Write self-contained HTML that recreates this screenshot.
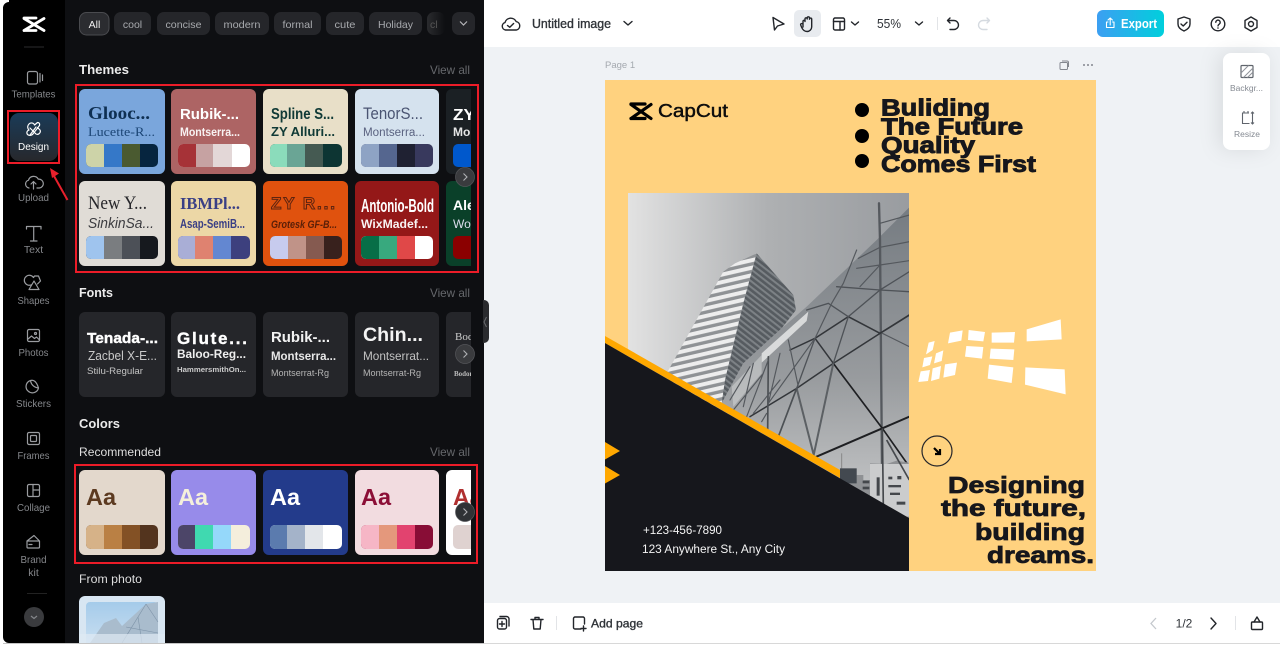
<!DOCTYPE html>
<html lang="en"><head><meta charset="utf-8"><title>Untitled image</title>
<style>
html,body{margin:0;padding:0;background:#fff;width:1280px;height:646px;overflow:hidden}
svg{display:block;font-family:"Liberation Sans",sans-serif}
.ic{fill:none;stroke:#9a9ca0;stroke-width:1.2;stroke-linecap:round;stroke-linejoin:round}
.hd{fill:none;stroke:#22252a;stroke-width:1.4;stroke-linecap:round;stroke-linejoin:round}
.rl{fill:#85878b;font-size:10.5px;text-anchor:middle}
.ch{fill:#a8aaae;font-size:10.5px;text-anchor:middle}
.va{fill:#66686c;font-size:12px}
.ti{fill:#ececec;font-size:13px;font-weight:bold}
.sb{fill:#dedede;font-size:12px}
.se{font-family:"Liberation Serif",serif}
.x{stroke-width:.35px}
</style></head><body>
<svg xmlns="http://www.w3.org/2000/svg" width="1280" height="646" viewBox="0 0 1280 646">
<defs>
<linearGradient id="dz" x1="0" y1="0" x2="0" y2="1"><stop offset="0" stop-color="#1a3b58"/><stop offset="1" stop-color="#27282c"/></linearGradient>
<linearGradient id="ex" x1="0" y1="0" x2="1" y2="0"><stop offset="0" stop-color="#3c9ff2"/><stop offset="1" stop-color="#00cfdc"/></linearGradient>
<linearGradient id="sky" x1="0" y1="0" x2="1" y2="0"><stop offset="0" stop-color="#e2e2e2"/><stop offset=".5" stop-color="#aeb0b2"/><stop offset="1" stop-color="#999ca0"/></linearGradient>
<linearGradient id="gl" x1="0" y1="0" x2="0" y2="1"><stop offset="0" stop-color="#757b81"/><stop offset=".55" stop-color="#989b9e"/><stop offset="1" stop-color="#cbcccd"/></linearGradient>
<linearGradient id="ph" x1="0" y1="0" x2="0" y2="1"><stop offset="0" stop-color="#a5cbea"/><stop offset="1" stop-color="#cfe2f2"/></linearGradient>
<linearGradient id="fd" x1="0" y1="0" x2="1" y2="0"><stop offset="0" stop-color="#2a2b2e"/><stop offset="1" stop-color="#0e0f12"/></linearGradient>
<clipPath id="cl"><rect x="79" y="0" width="392" height="643"/></clipPath>
<clipPath id="pc"><rect x="628" y="193" width="281" height="340"/></clipPath>
<clipPath id="lf"><path d="M170 40L105 70 70 95 -100 400V500H65L75 420 130 190Z"/></clipPath>
<clipPath id="dk"><path d="M170 40L280 165 288 210 245 265 130 370 65 490 75 420 130 190Z"/></clipPath>
<pattern id="st" width="200" height="22" patternUnits="userSpaceOnUse" patternTransform="rotate(-13)"><rect width="200" height="22" fill="#8f9295"/><rect width="200" height="12" fill="#ededed"/></pattern>
<pattern id="sd" width="200" height="14" patternUnits="userSpaceOnUse" patternTransform="rotate(38)"><rect width="200" height="14" fill="#565b60"/><rect width="200" height="6" fill="#7d8286"/></pattern>
</defs>

<!-- shell -->
<rect x="484" y="0" width="796" height="644" fill="#eff2f5"/>
<rect x="484" y="0" width="796" height="47" fill="#fff"/>
<rect x="484" y="603" width="796" height="40" fill="#fff"/>
<rect x="484" y="643" width="796" height="1" fill="#d8d8d8"/>
<path d="M3 8a6 6 0 0 1 6-6V0H484V643H9a6 6 0 0 1-6-6Z" fill="#000"/>
<rect x="65" y="0" width="419" height="643" fill="#0e0f12"/>
<rect x="3" y="643" width="481" height="1" fill="#c4c4c4"/>

<!-- rail -->
<path d="M24 18H36M24 30.500H36M24 18.500L44 30.500M24 30.500L44 18.500" fill="none" stroke="#fff" stroke-width="2.800" stroke-linecap="round"/>
<rect x="24" y="46.500" width="20" height="1" fill="#2c2c2e"/>
<g class="ic">
<rect x="27.500" y="71.500" width="10" height="12.500" rx="2"/><path d="M40 73.500V82M42.500 75V80.500"/>
<path d="M29 188a4 4 0 0 1-.5-7.800 5.300 5.300 0 0 1 9.800-1 4.300 4.300 0 0 1 1.200 8.800h-2.500M33.500 189v-7M31 184l2.500-2.500 2.500 2.500"/>
<path d="M26.500 229v-2.500H41V229M33.700 226.500V241M30.500 241h6.500"/>
<path d="M32 284.500a5 5 0 1 1 1.500-7l1-1.500h4l2 5-3 3M34 281l-5 8.500h10Z"/>
<rect x="27.500" y="329.500" width="12" height="12" rx="1.500"/><path d="M28 339l3.500-3 3 2.500 2-1.500 2.500 2.500"/><circle cx="35.500" cy="333.500" r="1"/>
<path d="M38.500 388a6.300 6.300 0 1 1-8-7.500c.5 4 3.500 7 8 7.500ZM30.500 380.500c3-1 6 .8 8 7.500"/>
<rect x="27.500" y="432.500" width="12" height="12" rx="1.500"/><rect x="30.500" y="435.500" width="6" height="6" rx="1"/>
<rect x="27.500" y="484.500" width="12" height="12" rx="1.500"/><path d="M33 484.500v12M33 490h6.500"/>
<path d="M27 541l7-5.500 5.500 5.500M27 541h12.500v6a1 1 0 0 1-1 1H28a1 1 0 0 1-1-1ZM29 544.500h3"/>
</g>
<text class="rl" x="33.500" y="97.500" textLength="44" lengthAdjust="spacingAndGlyphs">Templates</text>
<rect x="8" y="111" width="51" height="52" fill="none" stroke="#ec1c28" stroke-width="2"/>
<rect x="10" y="113" width="48" height="48" rx="9" fill="url(#dz)"/>
<path d="M29 124a3.500 3.500 0 0 1 5 0l.5 1 3-2.500c1.500 0 2.500 1 2 3l-7 9c-2 1.500-5 1-5.500-1-.5-1.500.5-3 2-3.500-2-2-1.500-4.500 0-6ZM30 128l6 6a3 3 0 0 0 4-4l-2.500-2.500M30 135l6-8" fill="none" stroke="#fff" stroke-width="1.200" stroke-linecap="round" stroke-linejoin="round"/>
<text x="33.500" y="150" fill="#fff" font-size="10.500" text-anchor="middle" textLength="31" lengthAdjust="spacingAndGlyphs">Design</text>
<path d="M67.500 200L54 176" stroke="#e8202c" stroke-width="2" fill="none"/><path d="M50 168l9 5.500-7 4.500Z" fill="#e8202c"/>
<text class="rl" x="33.500" y="201" textLength="31" lengthAdjust="spacingAndGlyphs">Upload</text>
<text class="rl" x="33.500" y="253">Text</text>
<text class="rl" x="33.500" y="304" textLength="32" lengthAdjust="spacingAndGlyphs">Shapes</text>
<text class="rl" x="33.500" y="356" textLength="30" lengthAdjust="spacingAndGlyphs">Photos</text>
<text class="rl" x="33.500" y="407" textLength="35" lengthAdjust="spacingAndGlyphs">Stickers</text>
<text class="rl" x="33.500" y="459" textLength="32" lengthAdjust="spacingAndGlyphs">Frames</text>
<text class="rl" x="33.500" y="511" textLength="33" lengthAdjust="spacingAndGlyphs">Collage</text>
<text class="rl" x="33.500" y="563" textLength="26" lengthAdjust="spacingAndGlyphs">Brand</text>
<text class="rl" x="33.500" y="576">kit</text>
<rect x="27" y="593" width="20" height="1" fill="#222"/>
<circle cx="34" cy="617" r="10" fill="#3a3b3e"/><path d="M31 616l3 2.500 3-2.500" fill="none" stroke="#85878b" stroke-width="1.200"/>

<!-- chips -->
<rect x="79.500" y="12.500" width="29.500" height="22.500" rx="7" fill="#2b2c30" stroke="#4a4b4f"/>
<text x="94.500" y="28" fill="#f0f0f0" font-size="10.500" text-anchor="middle">All</text>
<rect x="114" y="12" width="37" height="23" rx="7" fill="#25262a"/><text class="ch" x="132.500" y="28">cool</text>
<rect x="157" y="12" width="53" height="23" rx="7" fill="#25262a"/><text class="ch" x="183.500" y="28" textLength="36" lengthAdjust="spacingAndGlyphs">concise</text>
<rect x="215" y="12" width="54" height="23" rx="7" fill="#25262a"/><text class="ch" x="242" y="28" textLength="37" lengthAdjust="spacingAndGlyphs">modern</text>
<rect x="274" y="12" width="47" height="23" rx="7" fill="#25262a"/><text class="ch" x="297.500" y="28" textLength="30" lengthAdjust="spacingAndGlyphs">formal</text>
<rect x="326" y="12" width="38" height="23" rx="7" fill="#25262a"/><text class="ch" x="345" y="28" textLength="21" lengthAdjust="spacingAndGlyphs">cute</text>
<rect x="369" y="12" width="53" height="23" rx="7" fill="#25262a"/><text class="ch" x="395.500" y="28" textLength="35" lengthAdjust="spacingAndGlyphs">Holiday</text>
<rect x="427" y="12" width="18" height="23" rx="7" fill="url(#fd)"/><text x="430" y="28" fill="#555" font-size="10.500">cl</text>
<rect x="452" y="12" width="23" height="23" rx="7" fill="#25262a"/><path d="M460 21.500l3.500 3.500 3.500-3.500" fill="none" stroke="#b5b6b9" stroke-width="1.200"/>

<!-- headings -->
<text class="ti" x="79" y="74" textLength="50" lengthAdjust="spacingAndGlyphs">Themes</text>
<text class="va" x="430" y="74" textLength="40" lengthAdjust="spacingAndGlyphs">View all</text>
<text class="ti" x="79" y="297" textLength="34" lengthAdjust="spacingAndGlyphs">Fonts</text>
<text class="va" x="430" y="297" textLength="40" lengthAdjust="spacingAndGlyphs">View all</text>
<text class="ti" x="79" y="428" textLength="41" lengthAdjust="spacingAndGlyphs">Colors</text>
<text class="sb" x="79" y="456" textLength="82" lengthAdjust="spacingAndGlyphs">Recommended</text>
<text class="va" x="430" y="456" textLength="40" lengthAdjust="spacingAndGlyphs">View all</text>
<text class="sb" x="79" y="583" textLength="63" lengthAdjust="spacingAndGlyphs">From photo</text>

<g clip-path="url(#cl)">
<!-- themes row 1 -->
<rect x="79" y="89" width="86" height="85" rx="6" fill="#7aa6dc"/>
<text class="se" x="88" y="119" fill="#0e2f52" font-size="18" font-weight="bold" textLength="62" lengthAdjust="spacingAndGlyphs">Glooc...</text>
<text class="se" x="88" y="136" fill="#1c4676" font-size="13" textLength="67" lengthAdjust="spacingAndGlyphs">Lucette-R...</text>
<g><rect x="86" y="144" width="72" height="23" rx="5" fill="#06253f"/><path d="M104 144H91a5 5 0 0 0-5 5v13a5 5 0 0 0 5 5h13Z" fill="#cdd3a8"/><rect x="104" y="144" width="18" height="23" fill="#3578c8"/><rect x="122" y="144" width="18" height="23" fill="#4a5a30"/></g>

<rect x="171" y="89" width="85" height="85" rx="6" fill="#ad6464"/>
<text x="180" y="119" fill="#fff" font-size="15" font-weight="bold" textLength="59" lengthAdjust="spacingAndGlyphs">Rubik-...</text>
<text x="180" y="136" fill="#fff" font-size="12" font-weight="bold" textLength="60" lengthAdjust="spacingAndGlyphs" opacity=".92">Montserra...</text>
<g><rect x="178" y="144" width="72" height="23" rx="5" fill="#fff"/><path d="M196 144H183a5 5 0 0 0-5 5v13a5 5 0 0 0 5 5h13Z" fill="#a63237"/><rect x="196" y="144" width="17" height="23" fill="#c6a2a2"/><rect x="213" y="144" width="19" height="23" fill="#e3d7d7"/></g>

<rect x="263" y="89" width="85" height="85" rx="6" fill="#e8dfc8"/>
<text x="271" y="119" fill="#103a36" font-size="16" font-weight="bold" textLength="63" lengthAdjust="spacingAndGlyphs">Spline S...</text>
<text x="271" y="136" fill="#103a36" font-size="13" font-weight="bold" textLength="64" lengthAdjust="spacingAndGlyphs">ZY Alluri...</text>
<g><rect x="270" y="144" width="72" height="23" rx="5" fill="#0d3533"/><path d="M287 144H275a5 5 0 0 0-5 5v13a5 5 0 0 0 5 5h12Z" fill="#8bdcbb"/><rect x="287" y="144" width="18" height="23" fill="#6aa595"/><rect x="305" y="144" width="18" height="23" fill="#455a52"/></g>

<rect x="355" y="89" width="84" height="85" rx="6" fill="#d5e2ee"/>
<text x="363" y="119" fill="#4a5472" font-size="17" textLength="60" lengthAdjust="spacingAndGlyphs">TenorS...</text>
<text x="363" y="136" fill="#5a6280" font-size="11.500" textLength="62" lengthAdjust="spacingAndGlyphs">Montserra...</text>
<g><rect x="361" y="144" width="72" height="23" rx="5" fill="#38395d"/><path d="M379 144H366a5 5 0 0 0-5 5v13a5 5 0 0 0 5 5h13Z" fill="#8ea3c4"/><rect x="379" y="144" width="18" height="23" fill="#55668f"/><rect x="397" y="144" width="18" height="23" fill="#1f2132"/></g>

<rect x="446" y="89" width="60" height="85" rx="6" fill="#1b2024"/>
<text x="453" y="120" fill="#fff" font-size="16" font-weight="bold" textLength="22" lengthAdjust="spacingAndGlyphs">ZY</text>
<text x="453" y="136" fill="#e6e6e6" font-size="12" font-weight="bold">Mo</text>
<rect x="453" y="144" width="40" height="23" rx="5" fill="#0058cc"/>

<!-- themes row 2 -->
<rect x="79" y="181" width="86" height="85" rx="6" fill="#e0dcd6"/>
<text class="se" x="88" y="209" fill="#26262a" font-size="19" textLength="59" lengthAdjust="spacingAndGlyphs">New Y...</text>
<text x="88" y="228" fill="#3c3c40" font-size="15" font-style="italic" textLength="66" lengthAdjust="spacingAndGlyphs">SinkinSa...</text>
<g><rect x="86" y="236" width="72" height="23" rx="5" fill="#16191e"/><path d="M104 236H91a5 5 0 0 0-5 5v13a5 5 0 0 0 5 5h13Z" fill="#9fc4ee"/><rect x="104" y="236" width="18" height="23" fill="#7a7d80"/><rect x="122" y="236" width="18" height="23" fill="#4c5057"/></g>

<rect x="171" y="181" width="85" height="85" rx="6" fill="#ecd7a6"/>
<text class="se" x="180" y="209" fill="#3a3f85" font-size="17" font-weight="bold" textLength="60" lengthAdjust="spacingAndGlyphs">IBMPl...</text>
<text x="180" y="228" fill="#3a3f85" font-size="12.500" font-weight="bold" textLength="65" lengthAdjust="spacingAndGlyphs">Asap-SemiB...</text>
<g><rect x="178" y="236" width="72" height="23" rx="5" fill="#3d407e"/><path d="M195 236H183a5 5 0 0 0-5 5v13a5 5 0 0 0 5 5h12Z" fill="#a9aed6"/><rect x="195" y="236" width="18" height="23" fill="#df8270"/><rect x="213" y="236" width="18" height="23" fill="#6387d1"/></g>

<rect x="263" y="181" width="85" height="85" rx="6" fill="#e0520e"/>
<text x="271" y="209" fill="#e0520e" stroke="#5e2410" stroke-width="1" font-size="17" font-weight="bold" textLength="64" lengthAdjust="spacing">ZY R...</text>
<text x="271" y="228" fill="#5a1f08" font-size="11" font-weight="bold" font-style="italic" textLength="66" lengthAdjust="spacingAndGlyphs">Grotesk GF-B...</text>
<g><rect x="270" y="236" width="72" height="23" rx="5" fill="#38211d"/><path d="M288 236H275a5 5 0 0 0-5 5v13a5 5 0 0 0 5 5h13Z" fill="#c7cbee"/><rect x="288" y="236" width="18" height="23" fill="#c09388"/><rect x="306" y="236" width="18" height="23" fill="#855a50"/></g>

<rect x="355" y="181" width="84" height="85" rx="6" fill="#941818"/>
<text x="361" y="212" fill="#fff" font-size="18" font-weight="bold" textLength="73" lengthAdjust="spacingAndGlyphs">Antonio-Bold</text>
<text x="361" y="228" fill="#fff" font-size="12" font-weight="bold" textLength="67" lengthAdjust="spacingAndGlyphs" opacity=".95">WixMadef...</text>
<g><rect x="361" y="236" width="72" height="23" rx="5" fill="#fff"/><path d="M379 236H366a5 5 0 0 0-5 5v13a5 5 0 0 0 5 5h13Z" fill="#076e47"/><rect x="379" y="236" width="18" height="23" fill="#38a97e"/><rect x="397" y="236" width="18" height="23" fill="#e04848"/></g>

<rect x="446" y="181" width="60" height="85" rx="6" fill="#0a4029"/>
<text x="453" y="210" fill="#fff" font-size="14" font-weight="bold">Ale</text>
<text x="453" y="228" fill="#dde" font-size="12">Wo</text>
<rect x="453" y="236" width="40" height="23" rx="5" fill="#8b0000"/>

<!-- fonts -->
<rect x="79" y="312" width="86" height="85" rx="6" fill="#25262a"/>
<text x="87" y="343" fill="#fff" font-size="15" font-weight="bold" stroke="#fff" stroke-width=".4" textLength="71" lengthAdjust="spacingAndGlyphs">Tenada-...</text>
<text x="88" y="360" fill="#c9c9c9" font-size="12.500" textLength="69" lengthAdjust="spacingAndGlyphs">Zacbel X-E...</text>
<text x="87" y="374" fill="#c4c4c4" font-size="9.500" textLength="56" lengthAdjust="spacingAndGlyphs">Stilu-Regular</text>

<rect x="171" y="312" width="85" height="85" rx="6" fill="#25262a"/>
<text x="177" y="344" fill="#fff" font-size="17" font-weight="bold" stroke="#fff" stroke-width=".4" textLength="70" lengthAdjust="spacing">Glute...</text>
<text x="177" y="358" fill="#eee" font-size="12" font-weight="bold" textLength="69" lengthAdjust="spacingAndGlyphs">Baloo-Reg...</text>
<text x="177" y="372" fill="#ccc" font-size="7.500" font-weight="bold" textLength="69" lengthAdjust="spacingAndGlyphs">HammersmithOn...</text>

<rect x="263" y="312" width="85" height="85" rx="6" fill="#25262a"/>
<text x="271" y="342" fill="#f2f2f2" font-size="15" font-weight="bold" textLength="59" lengthAdjust="spacingAndGlyphs">Rubik-...</text>
<text x="271" y="360" fill="#e8e8e8" font-size="12" font-weight="bold" textLength="65" lengthAdjust="spacingAndGlyphs">Montserra...</text>
<text x="271" y="376" fill="#b5b5b5" font-size="9" textLength="58" lengthAdjust="spacingAndGlyphs">Montserrat-Rg</text>

<rect x="355" y="312" width="84" height="85" rx="6" fill="#25262a"/>
<text x="363" y="341" fill="#f4f4f4" font-size="19" font-weight="bold" textLength="60" lengthAdjust="spacingAndGlyphs">Chin...</text>
<text x="363" y="360" fill="#c2c2c2" font-size="12" textLength="66" lengthAdjust="spacingAndGlyphs">Montserrat...</text>
<text x="363" y="376" fill="#b5b5b5" font-size="9" textLength="58" lengthAdjust="spacingAndGlyphs">Montserrat-Rg</text>

<rect x="446" y="312" width="60" height="85" rx="6" fill="#25262a"/>
<text class="se" x="455" y="340" fill="#ccc" font-size="11">Bodoni</text>
<text class="se" x="454" y="376" fill="#bbb" font-size="7" font-weight="bold">Bodoni</text>

<!-- colours -->
<rect x="79" y="470" width="86" height="85" rx="6" fill="#e3d8cc"/>
<text x="86" y="505" fill="#5c3a20" font-size="23" font-weight="bold" textLength="30" lengthAdjust="spacingAndGlyphs">Aa</text>
<g><rect x="86" y="525" width="72" height="24" rx="5" fill="#53341e"/><path d="M104 525H91a5 5 0 0 0-5 5v14a5 5 0 0 0 5 5h13Z" fill="#d6b288"/><rect x="104" y="525" width="18" height="24" fill="#ba8044"/><rect x="122" y="525" width="18" height="24" fill="#835125"/></g>

<rect x="171" y="470" width="85" height="85" rx="6" fill="#978bea"/>
<text x="178" y="505" fill="#f5f0dc" font-size="23" font-weight="bold" textLength="30" lengthAdjust="spacingAndGlyphs">Aa</text>
<g><rect x="178" y="525" width="72" height="24" rx="5" fill="#f4eedc"/><path d="M195 525H183a5 5 0 0 0-5 5v14a5 5 0 0 0 5 5h12Z" fill="#4c4568"/><rect x="195" y="525" width="18" height="24" fill="#40d9b0"/><rect x="213" y="525" width="18" height="24" fill="#95d8fa"/></g>

<rect x="263" y="470" width="85" height="85" rx="6" fill="#233b8b"/>
<text x="270" y="505" fill="#fff" font-size="23" font-weight="bold" textLength="30" lengthAdjust="spacingAndGlyphs">Aa</text>
<g><rect x="270" y="525" width="72" height="24" rx="5" fill="#fff"/><path d="M287 525H275a5 5 0 0 0-5 5v14a5 5 0 0 0 5 5h12Z" fill="#5b7bae"/><rect x="287" y="525" width="18" height="24" fill="#a4b3c9"/><rect x="305" y="525" width="18" height="24" fill="#e3e6ea"/></g>

<rect x="355" y="470" width="84" height="85" rx="6" fill="#f2dce0"/>
<text x="361" y="505" fill="#8c0f37" font-size="23" font-weight="bold" textLength="30" lengthAdjust="spacingAndGlyphs">Aa</text>
<g><rect x="361" y="525" width="72" height="24" rx="5" fill="#880d36"/><path d="M379 525H366a5 5 0 0 0-5 5v14a5 5 0 0 0 5 5h13Z" fill="#f6b6c6"/><rect x="379" y="525" width="18" height="24" fill="#e4987c"/><rect x="397" y="525" width="18" height="24" fill="#e2436f"/></g>

<rect x="446" y="470" width="60" height="85" rx="6" fill="#fff"/>
<text x="453" y="505" fill="#b03030" font-size="23" font-weight="bold">Aa</text>
<rect x="453" y="525" width="40" height="24" rx="5" fill="#dfd2d0"/>

<!-- from photo -->
<rect x="79" y="596" width="86" height="60" rx="6" fill="#d8e6f2"/>
<rect x="86" y="602" width="72" height="50" rx="4" fill="url(#ph)"/>
<path d="M90 643l14-20 12-5 6 8 24-22 12-2v41Z" fill="#a9bccd"/>
<path d="M122 643l24-39M126 627l32 6M138 617l4 26M146 604l12 18" stroke="#7d93a8" stroke-width=".6" fill="none"/>
<rect x="79" y="634" width="86" height="9" fill="#dfeaf3" opacity=".7"/>
</g>

<!-- red outlines -->
<rect x="76" y="85" width="402" height="187" fill="none" stroke="#ec1c28" stroke-width="2"/>
<rect x="75" y="465" width="402" height="98" fill="none" stroke="#ec1c28" stroke-width="2"/>

<!-- scroll buttons -->
<g fill="#3a3b3e" stroke="#55565a" stroke-width=".7">
<circle cx="465" cy="177" r="9.500"/><circle cx="465" cy="354" r="9.500"/><circle cx="465" cy="512" r="9.500" fill="#2f3235"/>
</g>
<path d="M463.500 173.500l3.500 3.500-3.500 3.500M463.500 350.500l3.500 3.500-3.500 3.500M463.500 508.500l3.500 3.500-3.500 3.500" fill="none" stroke="#b0b1b4" stroke-width="1.100"/>

<!-- collapse handle -->
<path d="M483 300h1a5 5 0 0 1 5 5v33a5 5 0 0 1-5 5h-1Z" fill="#2a2b2e"/>
<path d="M486.500 317l-2.500 5 2.500 5" fill="none" stroke="#6a6b6e" stroke-width="1"/>

<!-- header -->
<path class="hd" d="M505.500 30a3.800 3.800 0 0 1-.5-7.400 6 6 0 0 1 11.200-1 4.300 4.300 0 0 1 .3 8.400ZM507.500 25.500l2.300 1.800 3.800-3.800"/>
<text x="532" y="28" fill="#2f3338" font-size="12.500" stroke="#2f3338" class="x" textLength="79" lengthAdjust="spacingAndGlyphs">Untitled image</text>
<path class="hd" d="M624 21.500l4 3.500 4-3.500"/>
<path class="hd" d="M773 17.500L784 24 777.500 26 774.500 30Z"/>
<rect x="794" y="10" width="27" height="27" rx="5" fill="#e8ebef"/>
<path class="hd" d="M803 27v-5.500c0-1.600 2-1.600 2 0V19c0-1.600 2.200-1.600 2.200 0v-1c0-1.600 2.300-1.600 2.300 0v1.200c0-1.500 2.200-1.500 2.200 0V27a4.700 4.700 0 0 1-4.500 4.500c-3 0-4.500-1.800-5.500-4l-1-2.500c-.5-1.400 1.300-2 2.300-.8Z"/>
<rect x="833.500" y="18" width="11" height="12" rx="1.500" class="hd"/><path class="hd" d="M833.500 21.500h11M840 21.500V30"/>
<path class="hd" d="M851.500 22l3.500 3 3.500-3"/>
<text x="877" y="28" fill="#2f3338" font-size="12.500" textLength="24" lengthAdjust="spacingAndGlyphs">55%</text>
<path class="hd" d="M915.500 22l3.500 3 3.500-3"/>
<rect x="937" y="17" width="1" height="13" fill="#e2e4e7"/>
<path class="hd" d="M950 18l-2.500 2.500L950 23M948 20.500h6a4.500 4.500 0 0 1 0 9h-4"/>
<path d="M987 18l2.500 2.500L987 23M989 20.500h-6a4.500 4.500 0 0 0 0 9h4" fill="none" stroke="#d5dae0" stroke-width="1.400" stroke-linecap="round" stroke-linejoin="round"/>
<rect x="1097" y="10" width="67" height="27" rx="6" fill="url(#ex)"/>
<path d="M1106.500 22v5.500h7.500V22h-1.500M1106.500 22h1.500M1110.200 25v-7M1108 20l2.200-2 2.200 2" fill="none" stroke="#fff" stroke-width="1.100" stroke-linecap="round" stroke-linejoin="round"/>
<text x="1121" y="28" fill="#fff" font-size="12.500" font-weight="bold" textLength="36" lengthAdjust="spacingAndGlyphs">Export</text>
<path class="hd" d="M1184 17l6 2v5c0 3.500-2.500 5.500-6 7-3.500-1.500-6-3.500-6-7v-5ZM1181 24l2.200 2 3.800-3.800"/>
<circle class="hd" cx="1218" cy="24" r="6.800"/><path class="hd" d="M1215.800 22.300a2.200 2.200 0 1 1 3.500 1.800c-.9.600-1.300 1-1.300 1.800"/><circle cx="1218" cy="28" r=".8" fill="#22252a"/>
<path class="hd" d="M1251 17l6 3.500v7l-6 3.500-6-3.500v-7Z"/><circle class="hd" cx="1251" cy="24" r="2.500"/>

<!-- page label -->
<text x="605" y="68" fill="#a4a9af" font-size="9.500">Page 1</text>
<g fill="none" stroke="#83878e" stroke-width="1"><rect x="1060" y="62.500" width="7.500" height="7" rx="1"/><path d="M1062 61h5a1.500 1.500 0 0 1 1.500 1.500V67"/></g>
<circle cx="1084" cy="65" r="1" fill="#83878e"/><circle cx="1088" cy="65" r="1" fill="#83878e"/><circle cx="1092" cy="65" r="1" fill="#83878e"/>

<!-- side panel -->
<rect x="1223" y="53" width="47" height="97" rx="8" fill="#fff" style="filter:drop-shadow(-4px 0 10px rgba(0,0,0,.09))"/>
<rect x="1241" y="65.500" width="12" height="12" rx="1" fill="none" stroke="#5f646c" stroke-width="1.200"/>
<path d="M1241 73l7.500-7.500M1243.500 77.500l9.500-9.500M1247.500 77.500l5.500-5.500" stroke="#8e9299" stroke-width="1"/>
<text x="1230" y="91" fill="#858a92" font-size="8.500" textLength="33" lengthAdjust="spacingAndGlyphs">Backgr...</text>
<path d="M1249 113h-6.500v10.500h7M1244 111v2M1248 111v2M1252.500 112v12M1251 113.500l1.500-1.500 1.500 1.500M1251 122.500l1.500 1.500 1.500-1.500" fill="none" stroke="#5f646c" stroke-width="1.100"/>
<text x="1247" y="137" fill="#858a92" font-size="8.500" text-anchor="middle">Resize</text>

<!-- poster -->
<rect x="605" y="80" width="491" height="491" fill="#ffd27f"/>
<path d="M631 104H645M631 118.500H645M631 104.500L651 118.500M631 118.500L651 104.500" fill="none" stroke="#000" stroke-width="3.200" stroke-linecap="round"/>
<text x="658" y="117" fill="#0c0c0c" font-size="18" stroke="#0c0c0c" stroke-width=".45" textLength="70" lengthAdjust="spacingAndGlyphs">CapCut</text>
<circle cx="862" cy="110" r="7" fill="#000"/><circle cx="862" cy="136" r="7" fill="#000"/><circle cx="862" cy="161" r="7" fill="#000"/>
<g fill="#16171c" stroke="#16171c" stroke-width=".9" font-size="23" font-weight="bold">
<text x="881" y="115.500" textLength="109" lengthAdjust="spacingAndGlyphs">Buliding</text>
<text x="881" y="134.500" textLength="142" lengthAdjust="spacingAndGlyphs">The Future</text>
<text x="881" y="153" textLength="94" lengthAdjust="spacingAndGlyphs">Quality</text>
<text x="881" y="172" textLength="155" lengthAdjust="spacingAndGlyphs">Comes First</text>
</g>

<!-- photo -->
<g clip-path="url(#pc)">
<rect x="628" y="193" width="281" height="340" fill="url(#sky)"/>
<g transform="translate(700 240) scale(.33333)">
<g clip-path="url(#lf)"><rect x="-150" y="0" width="400" height="560" fill="url(#st)"/></g>
<g clip-path="url(#dk)"><rect x="50" y="30" width="260" height="480" fill="url(#sd)"/></g>
<path d="M640 -110V840H300L65 490 130 370 245 265 320 200 530 0Z" fill="url(#gl)"/>
<path d="M185 340L325 215 320 243 185 368Z" fill="#e5e6e6" opacity=".85"/>
<path d="M95 440L185 345 185 400 100 500Z" fill="#d8d9da" opacity=".5"/>
<g fill="none" stroke="#33363a" stroke-linecap="round">
<path stroke-width="7" stroke="#55595e" d="M537 -110L540 0 547 795"/>
<path stroke-width="5" d="M540 280L628 225"/>
<path stroke-width="6" stroke="#1e1f22" d="M547 565L628 530M547 565L345 652"/>
<path stroke-width="5" stroke="#1e1f22" d="M400 370L547 565 628 680"/>
<path stroke-width="4.500" d="M400 370L290 445 150 530"/>
<path stroke-width="6" stroke="#5c6064" d="M400 370L340 650M290 445L340 640"/>
<path stroke-width="5" stroke="#4c5054" d="M290 445L235 590M205 350L203 570"/>
<path stroke-width="4.500" d="M540 280L400 370M540 280L445 230 345 295 400 370M345 295L270 330"/>
<path stroke-width="4" stroke="#4e5257" d="M445 230L400 370M345 295L290 445M540 150L445 230M628 95L540 150M628 155L540 150 410 140M445 230L385 190 320 210"/>
<path stroke-width="3.500" stroke="#54585d" d="M628 5L540 22 475 55M628 62L540 75 470 85M540 75L480 140M470 30L430 130 395 190 345 295M345 295L205 490M265 300L295 440M140 530L205 360M90 480L150 380M130 500L160 370M160 520L240 420M628 320L547 280M100 510L190 400M205 490L240 340M185 545L200 520M540 -50L628 -75"/>
</g>
<path d="M425 640V700" stroke="#888" stroke-width="3"/>
<path d="M420 685H470V705H490V720H510V670L560 672 590 662 625 668 628 840H420Z" fill="#8f9194"/>
<path d="M420 685H470V730H420Z" fill="#434950"/>
<path d="M510 672H628V830H510Z" fill="#cbcccd"/>
<g fill="#44474b"><rect x="530" y="712" width="9" height="55"/><rect x="565" y="710" width="12" height="8"/><rect x="592" y="708" width="12" height="10"/><rect x="565" y="735" width="38" height="7"/><rect x="570" y="758" width="30" height="7"/><rect x="488" y="722" width="20" height="8"/><rect x="488" y="740" width="20" height="8"/><rect x="590" y="785" width="26" height="9"/></g>
<path d="M547 565L550 800M560 600L628 720" stroke="#45484c" stroke-width="5" fill="none"/>
</g>
</g>
<path d="M605 336L840 470V478L605 343Z" fill="#ffa800"/>
<path d="M605 343L909 518V571H605Z" fill="#16171c"/>
<path d="M605 442L620 451 605 459.500ZM605 466L620 475 605 483.500Z" fill="#ffa800"/>
<text x="643" y="534" fill="#f4f4f4" font-size="11.500" textLength="79" lengthAdjust="spacingAndGlyphs">+123-456-7890</text>
<text x="642" y="553" fill="#f4f4f4" font-size="11.500" textLength="143" lengthAdjust="spacingAndGlyphs">123 Anywhere St., Any City</text>

<!-- window shapes -->
<g transform="translate(900 300) scale(.33333)" fill="#fff">
<path d="M380 88L482 58 485 118 380 124ZM275 98L345 96 342 128 275 128ZM206 90L255 96 250 124 204 120ZM150 98L188 91 184 122 144 130ZM86 128L104 123 98 150 78 163ZM72 174L97 169 90 195 67 202ZM108 160L130 151 125 183 102 190ZM62 214L90 210 84 243 55 246ZM98 205L123 198 118 236 93 243ZM135 193L171 188 165 225 130 233ZM199 138L250 141 246 176 195 170ZM272 146L343 148 340 180 269 176ZM267 194L340 202 335 249 263 236ZM376 202L494 208 497 283 375 254Z"/>
</g>
<circle cx="937" cy="451" r="15" fill="none" stroke="#26262a" stroke-width="1.200"/>
<path d="M934 448L940 454M940 449V454H935" fill="none" stroke="#000" stroke-width="2.200"/>
<g fill="#16171c" stroke="#16171c" stroke-width=".8" font-size="23" font-weight="bold">
<text x="948" y="493" textLength="137" lengthAdjust="spacingAndGlyphs">Designing</text>
<text x="941" y="516" textLength="145" lengthAdjust="spacingAndGlyphs">the future,</text>
<text x="975" y="540" textLength="110" lengthAdjust="spacingAndGlyphs">building</text>
<text x="987" y="563" textLength="107" lengthAdjust="spacingAndGlyphs">dreams.</text>
</g>

<!-- footer -->
<rect class="hd" x="497.500" y="618.500" width="9" height="10.500" rx="2"/><path class="hd" d="M500 616.500h6.500a2.500 2.500 0 0 1 2.500 2.500v7M502 621.500v5M499.500 624h5"/>
<path class="hd" d="M531 619.500h12M533 619.500l.8 9.500h6.400l.8-9.500M535 619.500v-2h4v2"/>
<rect x="556" y="616" width="1" height="14" fill="#e2e4e7"/>
<path class="hd" d="M581 629h-6a1.500 1.500 0 0 1-1.500-1.500v-9a1.500 1.500 0 0 1 1.500-1.500h8a1.500 1.500 0 0 1 1.500 1.500V624M583.500 626v5M581 628.500h5"/>
<text x="591" y="627.500" fill="#2f3338" font-size="12" stroke="#2f3338" class="x" textLength="52" lengthAdjust="spacingAndGlyphs">Add page</text>
<path d="M1156 618l-5 5.500 5 5.500" fill="none" stroke="#c4c8cd" stroke-width="1.300"/>
<text x="1184" y="627.500" fill="#2f3338" font-size="12" text-anchor="middle">1/2</text>
<path class="hd" d="M1211 618l5 5.500-5 5.500"/>
<rect x="1235" y="616" width="1" height="14" fill="#e2e4e7"/>
<rect class="hd" x="1251.500" y="622" width="11" height="7.500" rx="1"/><path class="hd" d="M1254 622l3-5 3 5"/>
</svg>
</body></html>
